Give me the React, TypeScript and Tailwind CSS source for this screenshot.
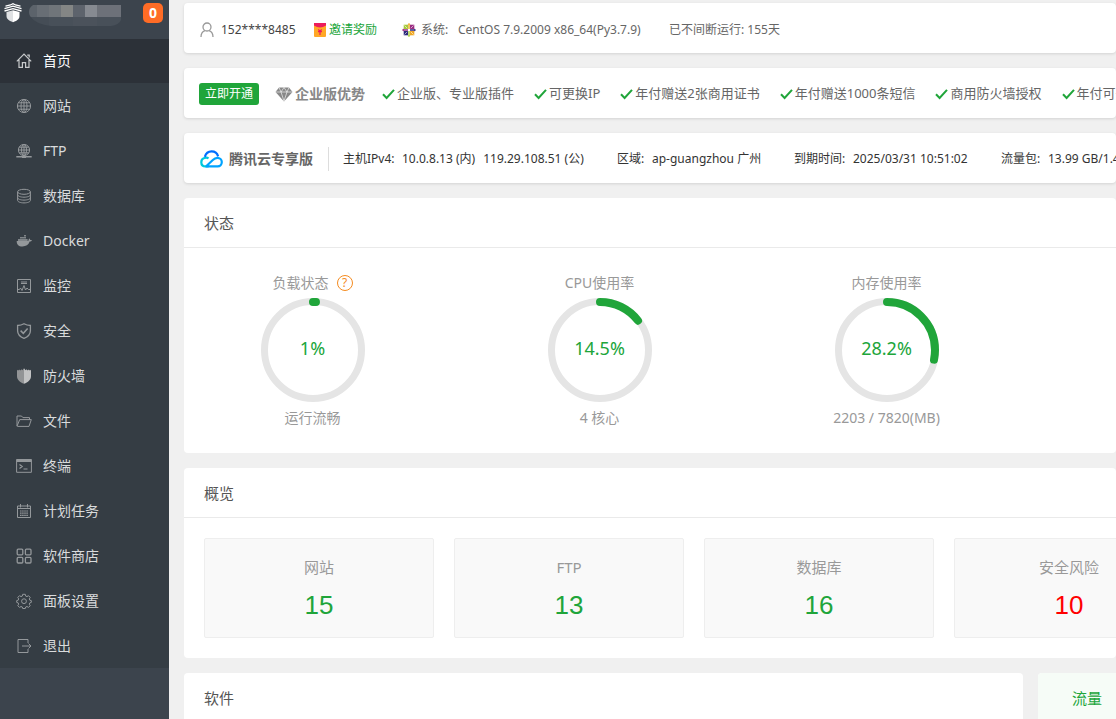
import type { ReactNode } from "react";

const SANS = "font-['Noto_Sans','Noto_Sans_CJK_SC',sans-serif]";

type IconName =
  | "home" | "globe" | "ftp" | "database" | "docker" | "monitor" | "shield"
  | "firewall" | "folder" | "terminal" | "calendar" | "apps" | "gear" | "exit";

const icons: Record<IconName, ReactNode> = {
  home: <path d="M.8 8.4 8 1.2l7.2 7.2M3 6.8V14.4h3.4V9.6h3.2v4.8H13V6.8M11.2 2.2h2v2.4" strokeWidth="1.2" />,
  globe: (
    <>
      <circle cx="8" cy="8" r="6.6" />
      <ellipse cx="8" cy="8" rx="3" ry="6.6" />
      <path d="M8 1.4v13.2M1.4 8h13.2M2.4 4.8h11.2M2.4 11.2h11.2" />
    </>
  ),
  ftp: (
    <>
      <circle cx="8" cy="7" r="5.6" />
      <ellipse cx="8" cy="7" rx="2.5" ry="5.6" />
      <path d="M8 1.4v13M2.4 7h11.2M3.2 4.2h9.6M3.2 9.8h9.6" />
      <path d="M.3 13.8h15.4M6 14.4h4" strokeWidth="1.4" />
    </>
  ),
  database: (
    <>
      <ellipse cx="8" cy="3.8" rx="6.4" ry="2.5" />
      <path d="M1.6 3.8v8.6c0 1.4 2.8 2.5 6.4 2.5s6.4-1.1 6.4-2.5V3.8M1.6 6.7c0 1.4 2.8 2.5 6.4 2.5s6.4-1.1 6.4-2.5M1.6 9.6c0 1.4 2.8 2.5 6.4 2.5s6.4-1.1 6.4-2.5" />
    </>
  ),
  docker: (
    <g fill="currentColor" stroke="none">
      <path d="M.7 8h11.2c.7 0 1-.8.8-1.9l.7-.6c.6.4.8.9.8 1.5.7-.1 1.2 0 1.7.3-.4 1-1.2 1.3-2.2 1.3C12.5 12 10 13.5 6.5 13.5 2.5 13.5.6 11.5.7 8Z" />
      <path d="M2.2 5.9h1.6v2.100H2.200zM4.200 5.900h1.600v2.100H4.200zM6.200 5.900h1.600v2.100H6.200zM8.200 5.900h1.600v2.100H8.200zM10.200 5.900h1.300v2.100h-1.300zM4.200 4h1.600v1.500H4.200zM6.200 4h1.600v1.500H6.200zM8.200 4h1.600v1.500H8.200zM8.200 2.100h1.600v1.500H8.200z" />
    </g>
  ),
  monitor: (
    <>
      <path d="M1.5 1.5h13v13h-13z" />
      <path d="M5 4h6M5 5.500h6" strokeWidth="1.2" />
      <path d="M1.5 11.500h2l1-1.500 1.500 2.500L8 7.500l1.500 4.500 1.500-2 1.500 1.500h2" />
    </>
  ),
  shield: (
    <>
      <path d="M8 .8c2 1.200 4 1.700 6.400 1.700v5.200c0 3.600-2.400 6-6.400 7.600-4-1.600-6.400-4-6.400-7.600V2.500C4 2.500 6 2 8 .8Z" strokeWidth="1.3" />
      <path d="m4.600 7.600 2.700 2.700 4.300-4.900" strokeWidth="1.500" />
    </>
  ),
  firewall: (
    <g stroke="none">
      <path d="M8 .3v15.500c-4-1.500-7-4-7-7.600V2.600l1-.8.8.8.9-1 .9.900.9-1.200.9.900Z" fill="#929496" />
      <path d="M8 .3v15.500c4-1.500 7-4 7-7.600V2.600l-1-.8-.8.8-.9-1-.9.900-.9-1.200-.9.900Z" fill="#c2c3c4" />
    </g>
  ),
  folder: <path d="M1 13V3h4.500l1.400 1.600h6.600v2M1 13.200 3.700 6.600h11.600L13 13.400H1.300" />,
  terminal: (
    <>
      <path d="M.6 1.500h14.800v12.800H.6z" />
      <path d="M.6 2.700h14.800" strokeWidth="2.600" />
      <path d="m3.500 6.600 2.700 2-2.700 2M7.500 11h4" strokeWidth="1.200" />
    </>
  ),
  calendar: (
    <>
      <path d="M1.500 3h13v11.500h-13zM1.500 5.500h13M4.500 1v3.500M11.500 1v3.500" />
      <path d="M4 8h8M4 10.200h8M4 12.400h8" strokeDasharray="1.600 .5" strokeWidth="1.200" />
    </>
  ),
  apps: (
    <g strokeWidth="1.300">
      <rect x="1.200" y="1.200" width="5.600" height="5.600" rx="1" />
      <rect x="9.400" y="1.200" width="5.600" height="5.600" rx="1" />
      <rect x="1.200" y="9.400" width="5.600" height="5.600" rx="1" />
      <rect x="9.400" y="9.400" width="5.600" height="5.600" rx="1" />
    </g>
  ),
  gear: (
    <>
      <path d="m6.700 1.300h2.600l.4 1.800 1.300.5 1.500-.9 1.700 1.700-.9 1.500.5 1.300 1.500.4v1.800l-1.500.5-.5 1.300.9 1.500-1.700 1.700-1.500-.9-1.300.5-.4 1.500H6.700l-.4-1.500-1.300-.5-1.500.9-1.700-1.700.9-1.500-.5-1.300-1.500-.5V7.600l1.500-.4.500-1.300-.9-1.500 1.700-1.700 1.500.9 1.300-.5Z" />
      <circle cx="8" cy="8.200" r="2.400" />
    </>
  ),
  exit: <path d="M12 5V1.500H2v13h10V11M6 8h9M12.500 5.500 15 8l-2.500 2.500" />,
};

const menu: { icon: IconName; label: string }[] = [
  { icon: "home", label: "首页" },
  { icon: "globe", label: "网站" },
  { icon: "ftp", label: "FTP" },
  { icon: "database", label: "数据库" },
  { icon: "docker", label: "Docker" },
  { icon: "monitor", label: "监控" },
  { icon: "shield", label: "安全" },
  { icon: "firewall", label: "防火墙" },
  { icon: "folder", label: "文件" },
  { icon: "terminal", label: "终端" },
  { icon: "calendar", label: "计划任务" },
  { icon: "apps", label: "软件商店" },
  { icon: "gear", label: "面板设置" },
  { icon: "exit", label: "退出" },
];

function MaskedName() {
  return (
    <svg width="92" height="21" viewBox="0 0 92 21" aria-hidden="true" shapeRendering="crispEdges">
      <clipPath id="mask-shape">
        <path d="M4 0H92V15Q90 20 82 21H22Q6 19 1 11Q-2 4 4 0Z" />
      </clipPath>
      <g clipPath="url(#mask-shape)">
        <path d="M0 0h8v12H0z" fill="#5c636b" />
        <path d="M8 0h12v12H8z" fill="#686e75" />
        <path d="M20 0h12v12H20z" fill="#70757a" />
        <path d="M32 0h12v12H32z" fill="#848685" />
        <path d="M44 0h12v12H44z" fill="#5d636c" />
        <path d="M56 0h12v12H56z" fill="#868a91" />
        <path d="M68 0h24v12H68z" fill="#6d7179" />
        <path d="M0 12h20v9H0z" fill="#454d56" />
        <path d="M20 12h24v9H20z" fill="#485059" />
        <path d="M44 12h24v9H44z" fill="#4b525b" />
        <path d="M68 12h24v9H68z" fill="#485059" />
      </g>
    </svg>
  );
}

function Sidebar() {
  return (
    <aside className="w-[169px] shrink-0 bg-[#3c444d]">
      <div className="flex h-[39px] items-start pt-[3px] pl-1 pr-[6px]">
        <svg width="18" height="20" viewBox="0 0 18 20" aria-hidden="true">
          <path
            d="M1.500 3.200 6.500 2 9 .7 11.500 2l5 1.200M.5 5.600 9 3.200l8.500 2.400M.5 8 9 5.600 17.500 8"
            fill="none" stroke="#fff" strokeWidth="1.300"
          />
          <path d="M2.500 9 9 7.200v12C4.500 17.500 2.500 15.800 2.500 13Z" fill="#dfe1e3" />
          <path d="M15.500 9 9 7.200v12c4.500-1.700 6.500-3.400 6.500-6.200Z" fill="#fff" />
        </svg>
        <div className="ml-[7px] mt-[2px]"><MaskedName /></div>
        <span className="ml-auto flex size-5 items-center justify-center rounded-[5px] bg-[#ff6c26] text-sm font-bold text-white">0</span>
      </div>
      <nav className="flex flex-col gap-px bg-[#353d44]">
        {menu.map((m, i) => (
          <a
            key={m.label}
            href="#"
            className={
              i === 0
                ? "flex h-11 items-center gap-[11px] bg-[#2c3138] pl-4 text-sm text-white"
                : "flex h-11 items-center gap-[11px] pl-4 text-sm text-[#d9dbdc]"
            }
          >
            <svg
              width="16" height="16" viewBox="0 0 16 16" fill="none" stroke="currentColor" aria-hidden="true"
              className={i === 0 ? "text-[#c8cacc]" : "text-[#94989b]"}
            >
              {icons[m.icon]}
            </svg>
            {m.label}
          </a>
        ))}
      </nav>
    </aside>
  );
}

function Strip({ children }: { children: ReactNode }) {
  return (
    <div className="flex h-[50px] items-center rounded-[4px] bg-white pt-[2px] whitespace-nowrap shadow-[0_1px_3px_rgba(0,0,0,0.12)]">
      {children}
    </div>
  );
}

function AccountStrip() {
  return (
    <Strip>
      <div className="flex items-center pt-px pl-4 text-xs text-[#666]">
        <svg width="14" height="16" viewBox="0 0 14 16" fill="none" stroke="#999" strokeWidth="1.300" aria-hidden="true">
          <circle cx="7" cy="5" r="4" />
          <path d="M1 15c0-3.500 1.500-5.500 4-6.400M13 15c0-3.500-1.500-5.500-4-6.400" />
        </svg>
        <span className="ml-[7px] w-[93px] text-[#444]">152****8485</span>
        <a href="#" className="flex items-center text-[#20a53a]">
          <svg width="12" height="14" viewBox="0 0 12 14" aria-hidden="true">
            <rect width="12" height="14" rx="1" fill="#ffa726" />
            <path d="M0 0h12v2.500Q9 4.500 6 4.500T0 2.500Z" fill="#ec1c5c" />
            <path d="m4.300 6.500 1.700 1.700 1.700-1.700M4 8.700h4M6 8.200V12" stroke="#ec1c5c" strokeWidth="1.200" fill="none" />
          </svg>
          <span className="ml-[3px] w-[49px]">邀请奖励</span>
        </a>
        <svg width="14" height="14" viewBox="0 0 14 14" className="ml-6" aria-hidden="true">
          <path d="M1.700 1.700h4.300v4.300H1.700z" fill="#a5c93a" />
          <path d="M8 1.700h4.300v4.300H8z" fill="#9b2c82" />
          <path d="M1.700 8h4.300v4.300H1.700z" fill="#2c2a7c" />
          <path d="M8 8h4.300v4.300H8z" fill="#efa724" />
          <path d="M2.500 2.500 5.200 5.200M11.500 2.500 8.800 5.200M2.500 11.500 5.200 8.800M11.500 11.500 8.800 8.800" stroke="#fff" strokeWidth=".6" />
          <path d="M7 0 8.500 1.600H7.700V6H6.300V1.600H5.500Z" fill="#efa724" />
          <path d="M7 14 5.500 12.400h.8V8h1.400v4.400h.8Z" fill="#a5c93a" />
          <path d="M0 7 1.600 5.500v.8H6v1.400H1.600v.8Z" fill="#9b2c82" />
          <path d="m14 7-1.600-1.500v.8H8v1.400h4.400v.8Z" fill="#2c2a7c" />
        </svg>
        <span className="ml-[5px] w-[37px]">系统:</span>
        <span className="w-[211px]">CentOS 7.9.2009 x86_64(Py3.7.9)</span>
        <span>已不间断运行: 155天</span>
      </div>
    </Strip>
  );
}

const perks = ["企业版、专业版插件", "可更换IP", "年付赠送2张商用证书", "年付赠送1000条短信", "商用防火墙授权", "年付可开发票"];

function UpgradeStrip() {
  return (
    <Strip>
      <div className="flex items-center pl-[15px]">
        <button className="flex h-[22px] w-[60px] items-center justify-center rounded-[3px] bg-[#20a53a] text-xs text-white">立即开通</button>
        <svg width="18" height="15" viewBox="0 0 18 15" className="ml-4" aria-hidden="true">
          <path d="M4 .5h10L17.500 5 9 14.500.5 5Z" fill="#888" />
          <path d="M.5 5h17M4 .5 6 5l3 9 3-9 2-4.500M6 5l3-4.500L12 5" stroke="#fff" strokeWidth=".6" fill="none" />
        </svg>
        <span className="ml-[2px] text-sm font-bold text-[#888]">企业版优势</span>
        <ul className="ml-[17px] flex gap-5 text-[13px] text-[#666]">
          {perks.map((p) => (
            <li key={p} className="flex items-center gap-[2px]">
              <svg width="13" height="12" viewBox="0 0 13 12" fill="none" stroke="#20a53a" strokeWidth="2" aria-hidden="true">
                <path d="M1 6.300 4.600 10 12 1.800" />
              </svg>
              {p}
            </li>
          ))}
        </ul>
      </div>
    </Strip>
  );
}

function CloudStrip() {
  return (
    <Strip>
      <div className="flex items-center pl-4 text-xs text-[#333]">
        <svg width="23" height="18" viewBox="0 0 23 18" fill="none" strokeWidth="2.200" aria-hidden="true">
          <path d="M8.500 8.500C7.200 7.300 1.300 7 1.300 12.200c0 2.600 1.900 4.200 4.300 4.200h3" stroke="#00c8dc" />
          <path d="M4.800 6.800C6 3 8.500 1.400 11.500 1.400c3.400 0 5.800 2 6.600 5" stroke="#006eff" />
          <path d="M5.600 16.400h12c2.500 0 4.200-1.900 4.200-4.300 0-2.500-2-4.300-4.400-4.300-2 0-3.200.8-4.600 2.200l-6.600 6.200" stroke="#00a3ff" />
        </svg>
        <span className="ml-[6px] border-r border-[#ddd] pr-[15px] text-sm leading-6 font-bold text-[#666]">腾讯云专享版</span>
        <span className="ml-[14px] w-[59px]">主机IPv4:</span>
        <span className="flex w-[215px] gap-2">
          <span>10.0.8.13 (内)</span>
          <span>119.29.108.51 (公)</span>
        </span>
        <span className="w-[35px]">区域:</span>
        <span className="w-[142px]">ap-guangzhou 广州</span>
        <span className="w-[59px]">到期时间:</span>
        <span className="w-[148px]">2025/03/31 10:51:02</span>
        <span className="w-[47px]">流量包:</span>
        <span>13.99 GB/1.46 TB</span>
      </div>
    </Strip>
  );
}

function PanelTitle({ children }: { children: ReactNode }) {
  return <h2 className="flex h-[50px] items-center border-b border-[#eaeaea] px-5 pt-[2px] text-[15px] text-[#555]">{children}</h2>;
}

function Gauge({ title, value, note, help }: { title: string; value: number; note: string; help?: boolean }) {
  const r = 48;
  const c = 2 * Math.PI * r;
  return (
    <div className="flex w-[287px] shrink-0 flex-col items-center text-sm text-[#999]">
      <div className="flex h-5 items-center gap-2">
        {title}
        {help && (
          <button aria-label="帮助" className="flex size-4 items-center justify-center rounded-full border border-[#f58b1f] text-xs text-[#f58b1f]">
            ?
          </button>
        )}
      </div>
      <div className="mt-[5px] grid place-items-center">
        <svg width="104" height="104" viewBox="0 0 104 104" fill="none" className="col-start-1 row-start-1" aria-hidden="true">
          <circle cx="52" cy="52" r="48.500" stroke="#e5e5e5" strokeWidth="7" />
          <circle
            cx="52" cy="52" r={r} stroke="#20a53a" strokeWidth="8" strokeLinecap="round"
            strokeDasharray={`${(c * value) / 100} ${c}`} transform="rotate(-90 52 52)"
          />
        </svg>
        <span className="col-start-1 row-start-1 pb-1 text-lg text-[#20a53a]">{value}%</span>
      </div>
      <div className="mt-[6px] leading-5">{note}</div>
    </div>
  );
}

const stats = [
  { label: "网站", value: 15 },
  { label: "FTP", value: 13 },
  { label: "数据库", value: 16 },
  { label: "安全风险", value: 10, alert: true },
];

export default function App() {
  return (
    <div className={`${SANS} flex h-screen overflow-hidden bg-[#f0f0f0]`}>
      <Sidebar />
      <main className="flex min-w-0 flex-1 flex-col gap-[15px] overflow-hidden pt-[3px] pl-[15px] *:shrink-0">
        <AccountStrip />
        <UpgradeStrip />
        <CloudStrip />
        <section className="rounded-[4px] bg-white">
          <PanelTitle>状态</PanelTitle>
          <div className="-ml-[15px] flex pt-[25px] pb-[25px]">
            <Gauge title="负载状态" value={1} note="运行流畅" help />
            <Gauge title="CPU使用率" value={14.5} note="4 核心" />
            <Gauge title="内存使用率" value={28.2} note="2203 / 7820(MB)" />
          </div>
        </section>
        <section className="rounded-[4px] bg-white">
          <PanelTitle>概览</PanelTitle>
          <ul className="flex gap-5 p-5">
            {stats.map((s) => (
              <li key={s.label} className="flex h-[100px] w-[230px] shrink-0 flex-col items-center rounded-[2px] border border-[#eee] bg-[#f9f9f9] pt-[18px]">
                <span className="text-[15px] leading-5 text-[#999]">{s.label}</span>
                <a href="#" className={s.alert ? "mt-3 font-['Liberation_Sans',sans-serif] text-[26px] leading-8 text-[#f00]" : "mt-3 font-['Liberation_Sans',sans-serif] text-[26px] leading-8 text-[#20a53a]"}>
                  {s.value}
                </a>
              </li>
            ))}
          </ul>
        </section>
        <div className="flex gap-[15px]">
          <section className="w-[839px] shrink-0 rounded-[4px] bg-white">
            <PanelTitle>软件</PanelTitle>
          </section>
          <section className="min-w-[300px] shrink-0 rounded-[4px] bg-white">
            <button className="flex h-[50px] items-center rounded-tl-[4px] bg-[#f6fcf7] px-[34px] text-[15px] text-[#20a53a]">流量</button>
          </section>
        </div>
      </main>
    </div>
  );
}
